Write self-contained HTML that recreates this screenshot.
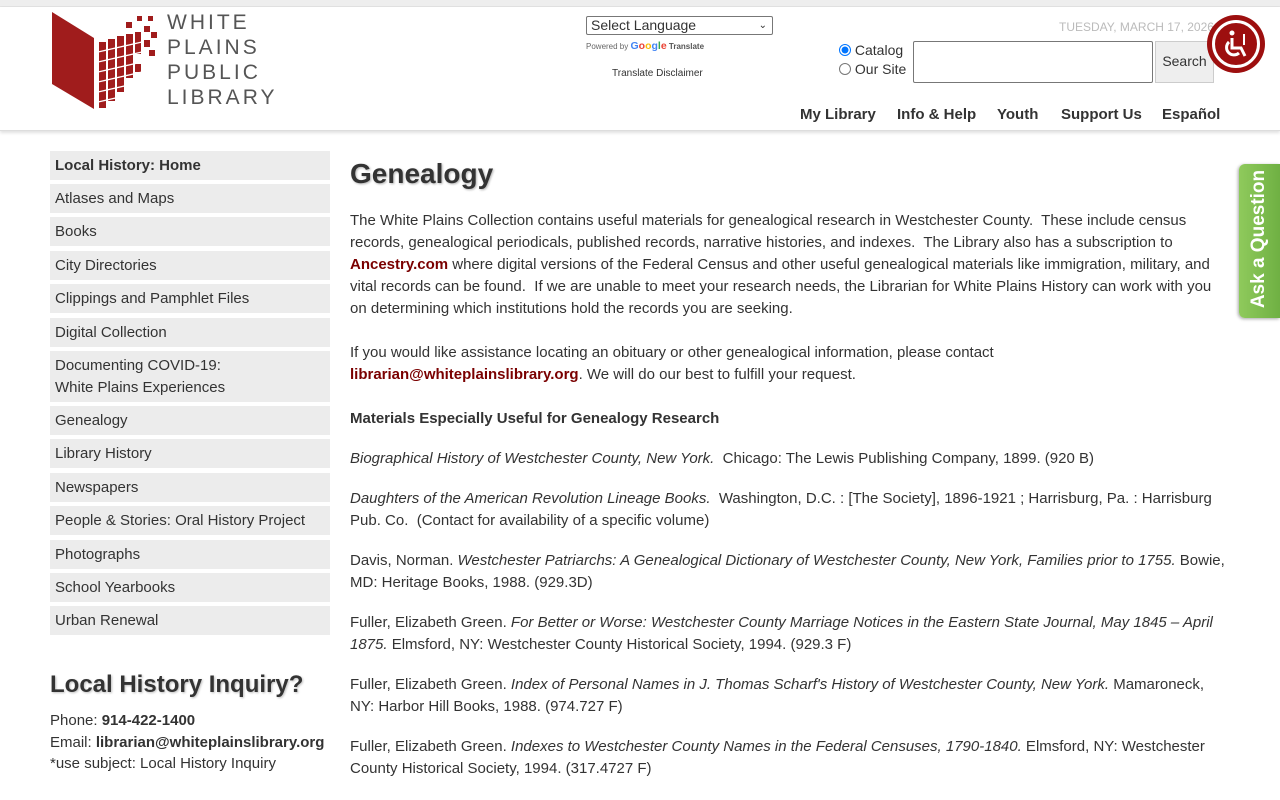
<!DOCTYPE html>
<html><head><meta charset="utf-8"><style>
*{margin:0;padding:0;box-sizing:border-box}
body{width:1280px;height:800px;overflow:hidden;background:#fff;font-family:"Liberation Sans",Arial,sans-serif;color:#333;position:relative}
.a{position:absolute}
.topbar{left:0;top:0;width:1280px;height:7px;background:#eee;border-bottom:1px solid #e2e2e2}
.hdr{left:0;top:7px;width:1280px;height:124px;border-bottom:1px solid #ddd;box-shadow:0 2px 3px rgba(0,0,0,.12)}
.logo-t{left:167px;top:10px;font-size:21px;letter-spacing:3px;line-height:25px;color:#555}
.nav{top:106px;font-size:15px;font-weight:bold;color:#333}
.side{left:50px;width:280px;height:29px;background:#ececec;font-size:15px;padding:4px 5px;line-height:22px;color:#333}
.m{left:350px;width:875px;font-size:15px;line-height:22px;color:#333}
.m a,.red{color:#7a0000;font-weight:bold;text-decoration:none}
i{font-style:italic}
</style></head><body>
<div class="a topbar"></div>
<div class="a hdr"></div>
<svg class="a" style="left:52px;top:12px" width="108" height="98" viewBox="0 0 108 98">
<polygon points="0,0 42,26 42,97 0,72" fill="#a01c1c"/>
<g fill="#a01c1c">
<rect x="47" y="30" width="7" height="66"/>
<rect x="56" y="27" width="7" height="62"/>
<rect x="65" y="24" width="7" height="56"/>
<rect x="74" y="22" width="7" height="44"/>
<rect x="83" y="20" width="6" height="22"/>
<rect x="83" y="52" width="6" height="8"/>
<rect x="92" y="14" width="6" height="6"/>
<rect x="92" y="28" width="6" height="7"/>
<rect x="97" y="38" width="6" height="6"/>
<rect x="99" y="20" width="6" height="6"/>
<rect x="96" y="4" width="5" height="5"/>
<rect x="74" y="10" width="6" height="6"/>
<rect x="85" y="4" width="5" height="5"/>
</g>
<g stroke="#fff" stroke-width="1.3">
<line x1="46" y1="40" x2="90" y2="30"/><line x1="46" y1="50" x2="90" y2="40"/><line x1="46" y1="60" x2="90" y2="50"/><line x1="46" y1="70" x2="90" y2="60"/><line x1="46" y1="80" x2="90" y2="70"/><line x1="46" y1="90" x2="90" y2="80"/>
</g></svg>
<div class="a logo-t">WHITE<br>PLAINS<br>PUBLIC<br>LIBRARY</div>

<div class="a" style="left:586px;top:16px;width:187px;height:19px;border:1px solid #777;border-radius:2px;font-size:14px;line-height:17px;padding-left:4px;color:#333">Select Language<span style="position:absolute;right:5px;top:0;font-size:10px">&#8964;</span></div>
<div class="a" style="left:586px;top:40px;font-size:8px;color:#666">Powered by <b style="font-size:10.5px;color:#4285f4">G<span style="color:#ea4335">o</span><span style="color:#fbbc05">o</span>g<span style="color:#34a853">l</span><span style="color:#ea4335">e</span></b> <b style="color:#555">Translate</b></div>
<div class="a" style="left:612px;top:68px;font-size:10px;color:#333">Translate Disclaimer</div>

<div class="a" style="left:1059px;top:20px;font-size:12px;color:#bbb">TUESDAY, MARCH 17, 2026</div>
<div class="a" style="left:839px;top:41px;font-size:14px;line-height:19px;color:#333">
<div><span style="display:inline-block;width:12px;height:12px;border-radius:50%;border:1px solid #0075ff;background:radial-gradient(#0075ff 45%,#fff 52%);vertical-align:-1px"></span> Catalog</div>
<div><span style="display:inline-block;width:12px;height:12px;border-radius:50%;border:1px solid #777;vertical-align:-1px"></span> Our Site</div></div>
<div class="a" style="left:913px;top:41px;width:240px;height:42px;border:1px solid #777;border-radius:2px"></div>
<div class="a" style="left:1155px;top:41px;width:59px;height:42px;border:1px solid #ccc;background:#eee;font-size:14px;color:#333;text-align:center;line-height:39px">Search</div>
<div class="a" style="left:1207px;top:15px;width:58px;height:58px;border-radius:50%;background:#9d0f0f"><div style="position:absolute;left:5px;top:5px;width:48px;height:48px;border:3px solid #fff;border-radius:50%"></div>
<svg style="position:absolute;left:16px;top:14px" width="28" height="30" viewBox="0 0 28 30" fill="none" stroke="#fff" stroke-width="3"><circle cx="9" cy="4" r="2.5" fill="#fff" stroke="none"/><path d="M9 9v10h9l4 8"/><path d="M6 13a7 7 0 1 0 10 11"/><path d="M21 5v11" stroke-width="2"/></svg></div>

<div class="a nav" style="left:800px">My Library</div>
<div class="a nav" style="left:897px">Info &amp; Help</div>
<div class="a nav" style="left:997px">Youth</div>
<div class="a nav" style="left:1061px">Support Us</div>
<div class="a nav" style="left:1162px">Español</div>

<div class="a" style="left:1239px;top:164px;width:41px;height:154px;background:linear-gradient(90deg,#8fca5c,#6fb043);border-radius:6px 0 0 6px;box-shadow:-1px 1px 3px rgba(0,0,0,.35)">
<div style="position:absolute;left:-52px;top:63px;width:144px;transform:rotate(-90deg);text-align:center;color:#fff;font-weight:bold;font-size:19px;line-height:24px">Ask a Question</div></div>

<div class="a side" style="top:151px;font-weight:bold">Local History: Home</div>
<div class="a side" style="top:184px">Atlases and Maps</div>
<div class="a side" style="top:217px">Books</div>
<div class="a side" style="top:251px">City Directories</div>
<div class="a side" style="top:284px">Clippings and Pamphlet Files</div>
<div class="a side" style="top:318px">Digital Collection</div>
<div class="a side" style="top:351px;height:51px">Documenting COVID-19:<br>White Plains Experiences</div>
<div class="a side" style="top:406px">Genealogy</div>
<div class="a side" style="top:439px">Library History</div>
<div class="a side" style="top:473px">Newspapers</div>
<div class="a side" style="top:506px">People &amp; Stories: Oral History Project</div>
<div class="a side" style="top:540px">Photographs</div>
<div class="a side" style="top:573px">School Yearbooks</div>
<div class="a side" style="top:606px">Urban Renewal</div>

<div class="a" style="left:50px;top:671px;font-size:24px;font-weight:bold;color:#333;text-shadow:1px 1px 2px rgba(0,0,0,.25)">Local History Inquiry?</div>
<div class="a" style="left:50px;top:710px;font-size:15px;line-height:21.5px">Phone: <b>914-422-1400</b><br>Email: <b>librarian@whiteplainslibrary.org</b><br>*use subject: Local History Inquiry</div>

<div class="a m" style="top:157px;font-size:28px;line-height:34px;font-weight:bold;text-shadow:1px 1px 2px rgba(0,0,0,.3)">Genealogy</div>
<div class="a m" style="top:210px">The White Plains Collection contains useful materials for genealogical research in Westchester County.&nbsp; These include census records, genealogical periodicals, published records, narrative histories, and indexes.&nbsp; The Library also has a subscription to <a>Ancestry.com</a> where digital versions of the Federal Census and other useful genealogical materials like immigration, military, and vital records can be found.&nbsp; If we are unable to meet your research needs, the Librarian for White Plains History can work with you on determining which institutions hold the records you are seeking.</div>
<div class="a m" style="top:342px">If you would like assistance locating an obituary or other genealogical information, please contact<br><a>librarian@whiteplainslibrary.org</a>. We will do our best to fulfill your request.</div>
<div class="a m" style="top:408px;font-weight:bold">Materials Especially Useful for Genealogy Research</div>
<div class="a m" style="top:448px"><i>Biographical History of Westchester County, New York.</i>&nbsp; Chicago: The Lewis Publishing Company, 1899. (920 B)</div>
<div class="a m" style="top:488px"><i>Daughters of the American Revolution Lineage Books.</i>&nbsp; Washington, D.C. : [The Society], 1896-1921 ; Harrisburg, Pa. : Harrisburg Pub. Co.&nbsp; (Contact for availability of a specific volume)</div>
<div class="a m" style="top:550px">Davis, Norman. <i>Westchester Patriarchs: A Genealogical Dictionary of Westchester County, New York, Families prior to 1755.</i> Bowie, MD: Heritage Books, 1988. (929.3D)</div>
<div class="a m" style="top:612px">Fuller, Elizabeth Green. <i>For Better or Worse: Westchester County Marriage Notices in the Eastern State Journal, May 1845 – April 1875.</i> Elmsford, NY: Westchester County Historical Society, 1994. (929.3 F)</div>
<div class="a m" style="top:674px">Fuller, Elizabeth Green. <i>Index of Personal Names in J. Thomas Scharf's History of Westchester County, New York.</i> Mamaroneck, NY: Harbor Hill Books, 1988. (974.727 F)</div>
<div class="a m" style="top:736px">Fuller, Elizabeth Green. <i>Indexes to Westchester County Names in the Federal Censuses, 1790-1840.</i> Elmsford, NY: Westchester County Historical Society, 1994. (317.4727 F)</div>
</body></html>
